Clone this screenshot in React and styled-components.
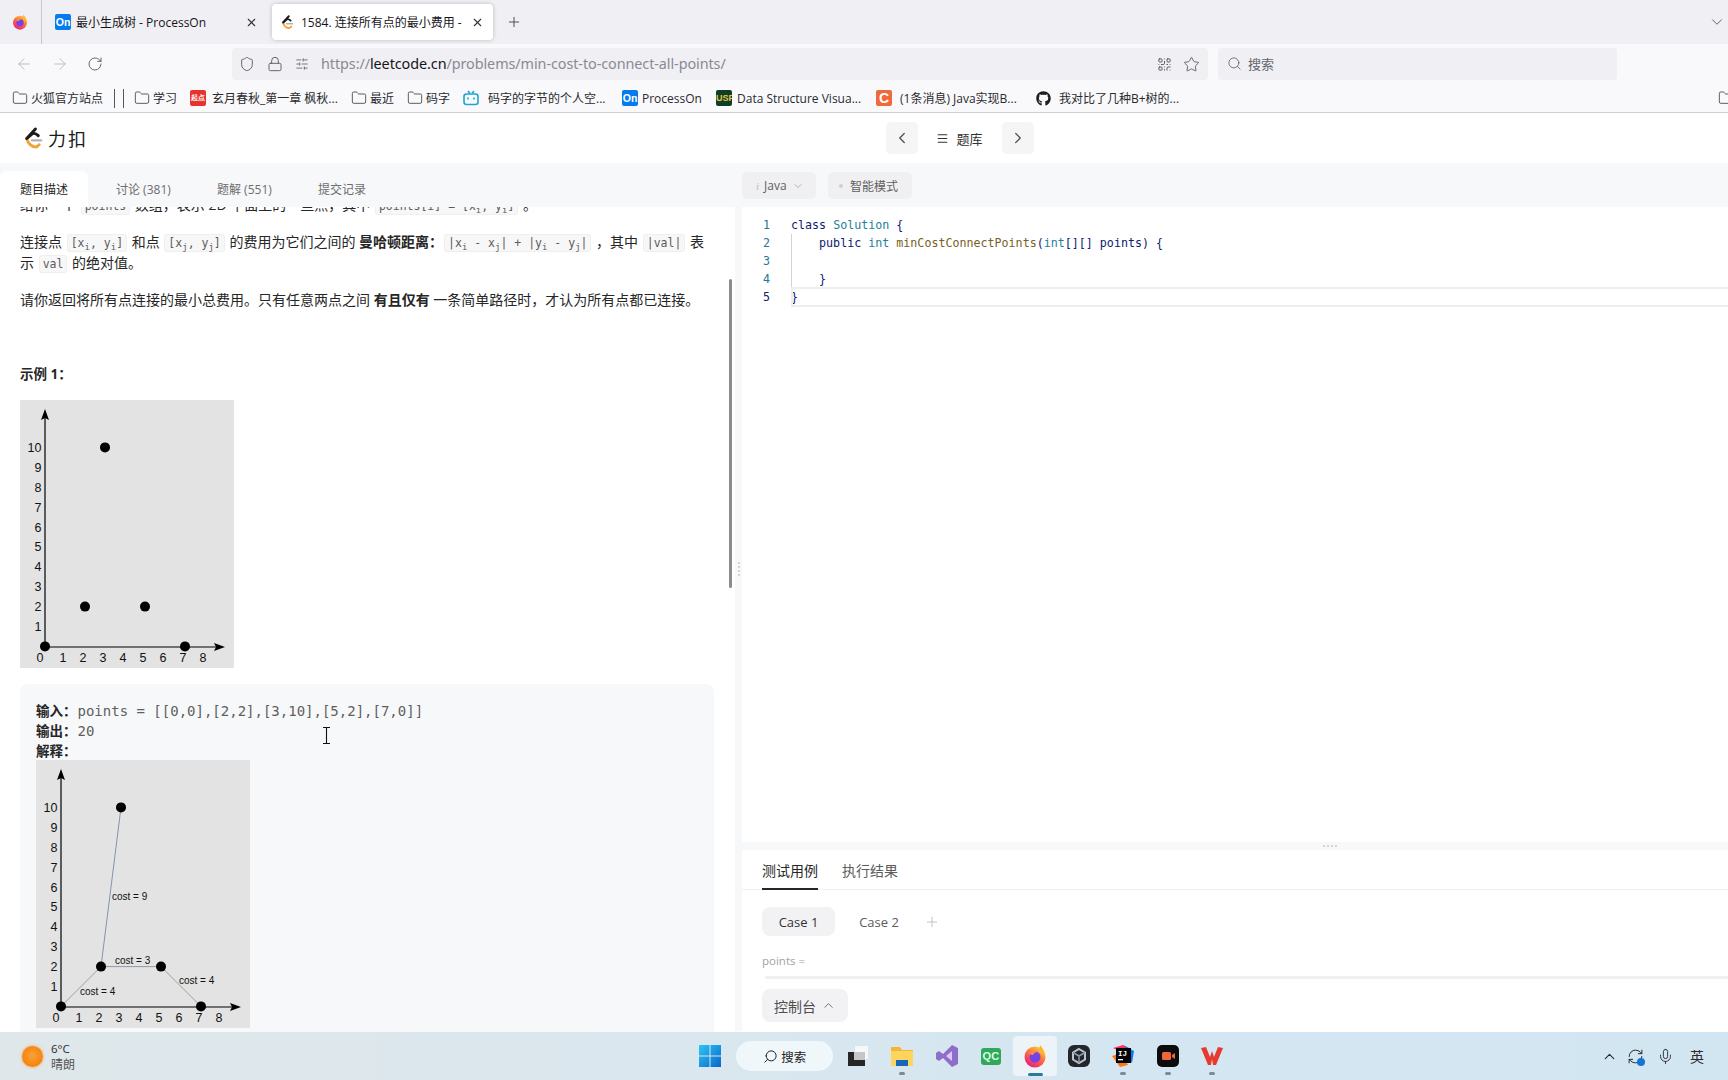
import React from "react";
import styled, { createGlobalStyle } from "styled-components";
import {
  ArrowLeft, ArrowRight, RotateCw, Shield, Lock, Search, Star, Plus, X, ChevronDown, ChevronUp,
  ChevronLeft, ChevronRight, Folder, QrCode, Menu, Mic, RefreshCw, SlidersHorizontal,
} from "lucide-react";
import { FaGithub } from "react-icons/fa";

const UI = `"Noto Sans", "Noto Sans CJK SC", sans-serif`;
const CJK = `"Open Sans", "Noto Sans CJK SC", sans-serif`;
const MONO = `"DejaVu Sans Mono", "Noto Sans CJK SC", monospace`;

const Global = createGlobalStyle`
  html, body { margin: 0; padding: 0; background: #fff; overflow: hidden; }
  * { box-sizing: border-box; }
  #root { width: 1728px; height: 1080px; }
`;

const Screen = styled.div`
  position: relative; width: 1728px; height: 1080px; overflow: hidden;
  display: flex; flex-direction: column; font-family: ${CJK}; color: #262626;
`;

/* browser chrome */
const TabStrip = styled.div`
  height: 44px; flex: none; background: #f0f0f4; display: flex; align-items: center; color: #15141a;
`;
const FoxCell = styled.div`
  width: 42px; height: 44px; flex: none; display: flex; align-items: center; justify-content: center;
  padding-right: 2px; border-right: 1px solid #c8c8cc;
`;
const Tab = styled.div`
  height: 36px; display: flex; align-items: center; flex: none; border-radius: 4px;
  width: ${p => p.$w}px; margin-left: ${p => p.$ml}px; padding: 0 9px 0 ${p => p.$pl}px;
  background: ${p => (p.$active ? "#fff" : "transparent")};
  box-shadow: ${p => (p.$active ? "0 0 4px rgba(0,0,0,.22)" : "none")};
`;
const TabTitle = styled.span`
  flex: 1; font-size: 12px; white-space: nowrap; overflow: hidden; margin-left: ${p => p.$ml}px;
`;
const NewTab = styled.div`margin-left: 13px; display: flex; color: #45454a;`;
const StripEnd = styled.div`margin-left: auto; padding-right: 2px; display: flex; color: #55555a;`;

const OnTile = styled.span`
  width: ${p => p.$s}px; height: ${p => p.$s}px; border-radius: 2px; background: #067bef; color: #fff; flex: none;
  font: 700 ${p => p.$s * 0.66}px/${p => p.$s}px "Liberation Sans", sans-serif; text-align: center;
`;

const Toolbar = styled.div`
  height: 38px; flex: none; background: #f9f9fb; display: flex; align-items: flex-start; padding-top: 4px; color: #5b5b66;
`;
const NavIcons = styled.div`
  width: 232px; flex: none; height: 32px; display: flex; align-items: center; padding-left: 15px; gap: 18px;
`;
const UrlBar = styled.div`
  width: 976px; height: 32px; flex: none; border-radius: 4px; background: #f0f0f4; display: flex; align-items: center;
  padding: 0 8px 0 7px; margin-right: 10px;
`;
const UrlIcons = styled.div`display: flex; align-items: center; gap: 12px; margin-right: 12px;`;
const Url = styled.div`
  flex: 1; font: 400 14.4px ${UI}; color: #8a8a92; white-space: nowrap; letter-spacing: -.08px; margin-top: -2px;
  b { font-weight: 400; color: #15141a; }
`;
const UrlEnd = styled.div`display: flex; align-items: center; gap: 11px;`;
const SearchBar = styled.div`
  width: 399px; height: 32px; flex: none; border-radius: 4px; background: #f0f0f4; display: flex; align-items: center;
  padding: 0 0 2px 9px; gap: 6px; font-size: 13px; color: #65656d;
`;

const Bookmarks = styled.div`
  height: 31px; flex: none; background: #f9f9fb; border-bottom: 1px solid #cfcfd4; display: flex; align-items: center;
  padding: 2px 0 0 12px; color: #15141a; position: relative;
`;
const Bookmark = styled.div`
  width: ${p => p.$w}px; flex: none; display: flex; align-items: center; gap: ${p => p.$gap ?? 3}px;
  font-size: 12px; white-space: nowrap; color: #2a2a2e;
`;
const BmSep = styled.div`width: 1px; height: 19px; background: #55555a; flex: none; margin-right: ${p => p.$mr}px;`;
const BmEnd = styled.div`margin-left: auto; margin-right: -6px; display: flex;`;
const Tile = styled.span`
  width: 16px; height: 16px; flex: none; border-radius: 2px; background: ${p => p.$bg}; color: ${p => p.$fg || "#fff"};
  font: 700 ${p => p.$fs || 9}px/16px "Liberation Sans", sans-serif; text-align: center; overflow: hidden;
`;

/* leetcode */
const Site = styled.div`width: 1920px; flex: 1; min-height: 0; display: flex; flex-direction: column; background: #f7f8fa;`;
const SiteHeader = styled.div`
  height: 50px; flex: none; background: #fff; display: grid; grid-template-columns: 1fr auto 1fr; align-items: center; padding-left: 22px;
`;
const Logo = styled.div`
  display: flex; align-items: center; gap: 3px; font: 400 18px "Noto Sans CJK SC", sans-serif; letter-spacing: 2px; color: #1a1a1a;
`;
const ProblemNav = styled.div`display: flex; align-items: center; margin-left: -23px;`;
const NavBtn = styled.div`
  width: 32px; height: 32px; border-radius: 5px; background: #f5f5f6; display: flex; align-items: center; justify-content: center; color: #4a4a4a;
`;
const NavList = styled.div`
  width: 84px; display: flex; align-items: center; justify-content: center; gap: 7px; font-size: 13px; color: #333;
`;

const Work = styled.div`flex: 1; min-height: 0; display: flex;`;
const LeftPane = styled.div`width: 735px; flex: none; display: flex; flex-direction: column; position: relative;`;
const PaneTabs = styled.div`height: 44px; flex: none; display: flex; align-items: flex-end; background: #f7f8fa;`;
const PaneTab = styled.div`
  height: 36px; width: ${p => p.$w}px; flex: none; padding: 9px 0 0 ${p => p.$pl}px; font-size: 12px;
  color: ${p => (p.$active ? "#262626" : "#6d6d6d")}; background: ${p => (p.$active ? "#fff" : "transparent")};
  border-radius: ${p => (p.$active ? "6px 6px 0 0" : "0")};
`;
const Scroll = styled.div`flex: 1; min-height: 0; overflow: hidden; background: #fff; padding: 0 21px 0 20px;`;
const Article = styled.div`margin-top: -13px; font-size: 14px; line-height: 21px; color: #262626;`;
const Para = styled.p`
  margin: 0 0 16px; white-space: ${p => (p.$nowrap ? "nowrap" : "normal")};
  strong { font-weight: 700; }
`;
const Code = styled.code`
  font: 400 11.5px/18px ${MONO}; color: #5c5c5c; background: #f7f7f8; border: 1px solid #efefef; border-radius: 3px; padding: 1px 3px; margin: 0 1px;
  sub { font-size: 9px; line-height: 0; }
`;
const ExampleHead = styled.p`margin: 54px 0 15px; font-weight: 700; font-size: 13.5px;`;
const ChartBox = styled.div`width: 214px; height: 268px; background: #e3e3e3; flex: none;`;
const Example = styled.div`
  margin-top: 16px; width: 694px; height: 420px; background: #f7f8fa; border-radius: 8px; padding: 16px; font-size: 14px; line-height: 20px;
`;
const ExLine = styled.div`
  height: 20px; font: 400 14px/20px ${MONO}; color: #5f5f5f; white-space: pre;
  b { font: 700 13.5px/20px "Noto Sans CJK SC", sans-serif; color: #262626; margin-right: 1px; }
`;
const ScrollThumb = styled.div`
  position: absolute; left: 729px; top: 116px; width: 3px; height: 309px; background: #8c8c8c; border-radius: 2px;
`;
const Gutter = styled.div`
  width: 7px; flex: none; display: flex; align-items: center; justify-content: center; padding-bottom: 58px;
`;
const Dots = styled.div`
  width: ${p => (p.$h ? "14px" : "2px")}; height: ${p => (p.$h ? "2px" : "14px")};
  background: repeating-linear-gradient(${p => (p.$h ? "90deg" : "0deg")}, #d4d4d4 0 2px, transparent 2px 4px);
`;

const RightPane = styled.div`flex: 1; min-width: 0; display: flex; flex-direction: column;`;
const EditorBar = styled.div`height: 44px; flex: none; display: flex; align-items: flex-end; gap: 12px; padding-bottom: 8px;`;
const BarBtn = styled.div`
  height: 27px; border-radius: 5px; background: #f0f0f2; color: #5f5f5f; font-size: 12px; display: flex; align-items: center;
  width: ${p => p.$w}px; padding-left: ${p => p.$pl}px; gap: ${p => p.$gap}px;
`;
const Hint = styled.i`color: #bdbdbd; font-size: 11px; font-family: "Liberation Serif", serif;`;
const SmallDot = styled.span`width: 4px; height: 4px; border-radius: 50%; background: #cfcfcf; flex: none;`;
const Editor = styled.div`
  height: 635px; flex: none; background: #fff; padding-top: 9px; font: 400 11.67px/18px ${MONO};
`;
const CodeRow = styled.div`
  position: relative; height: 18px; display: flex; color: #0b216f;
  ${p => p.$current && `&::after { content: ""; position: absolute; left: 49px; right: 0; top: -1px; bottom: -1px; border: 2px solid #eeeeee; border-right: 0; pointer-events: none; }`}
`;
const CodeText = styled.span`white-space: pre;`;
const LineNo = styled.span`
  width: 49px; flex: none; text-align: right; padding-right: 21px; color: ${p => (p.$current ? "#0b216f" : "#237893")};
`;
const IndentGuide = styled.span`
  position: absolute; left: 49px; top: 0; bottom: 0; width: 1px; background: #d3d3d3;
`;
const Kw = styled.span`color: ${p => p.$c};`;
const ResizeBar = styled.div`height: 8px; flex: none; display: flex; justify-content: center; align-items: center; width: 1176px;`;
const Console = styled.div`flex: 1; min-height: 0; background: #fff; padding-left: 20px; position: relative;`;
const ConsoleTabs = styled.div`
  height: 40px; display: flex; gap: 24px; margin-left: -20px; padding-left: 20px; border-bottom: 1px solid #f0f0f0; font-size: 14px; padding-top: 11px;
`;
const ConsoleTab = styled.div`
  height: 29px; width: 56px; white-space: nowrap; line-height: 20px; font-size: 14px; color: ${p => (p.$active ? "#262626" : "#5c5c5c")};
  ${p => p.$active && `border-bottom: 2px solid #262626;`}
`;
const Cases = styled.div`display: flex; align-items: center; margin-top: 17px; height: 29px; font-size: 13px; color: #5c5c5c;`;
const CasePill = styled.div`
  width: ${p => p.$w}px; height: 29px; display: flex; align-items: center; justify-content: center; border-radius: 8px;
  background: ${p => (p.$active ? "#f2f2f4" : "transparent")}; color: ${p => (p.$active ? "#333" : "#5c5c5c")};
`;
const AddCase = styled.div`display: flex; margin-left: 1px; color: #b5b5b5;`;
const ParamLabel = styled.div`font-size: 11.5px; color: #a3a3a3; line-height: 16px; margin-top: 17px;`;
const ParamLine = styled.div`height: 3px; margin: 7px 0 0 3px; background: #f0f0f0; border-radius: 2px;`;
const ConsoleBtn = styled.div`
  margin-top: 10px; width: 86px; height: 33px; border-radius: 8px; background: #f2f2f4; color: #4e4e4e; font-size: 14px;
  display: flex; align-items: center; justify-content: center; gap: 5px;
`;

/* taskbar */
const Taskbar = styled.div`
  height: 48px; flex: none; display: flex; align-items: center;
  background: linear-gradient(90deg, #dfe7ea 0%, #dbe7ee 35%, #d4e6f1 65%, #d2e6f2 100%);
  box-shadow: 0 -1px 0 rgba(255,255,255,.6);
`;
const Weather = styled.div`width: 688px; flex: none; display: flex; align-items: center; padding: 1px 0 0 22px; gap: 8px;`;
const Sun = styled.span`
  width: 21px; height: 21px; border-radius: 50%; background: radial-gradient(circle at 50% 45%, #f8a23a, #f7820c 70%, #f68a1c);
  box-shadow: 0 0 2px 1px rgba(250,170,90,.6);
`;
const WeatherText = styled.div`font-size: 11.5px; line-height: 16px; color: #2b2b2b; span { display: block; color: #555; font-size: 12px; }`;
const TaskCell = styled.div`
  position: relative; width: 44.2px; height: 40px; flex: none; display: flex; align-items: center; justify-content: center; border-radius: 4px;
  background: ${p => (p.$active ? "rgba(255,255,255,.55)" : "transparent")};
  ${p => p.$dot && `&::after { content: ""; position: absolute; bottom: ${p.$active ? 0 : 1}px; left: 50%; width: ${p.$active ? 15 : 6}px; height: 3px; margin-left: -${p.$active ? 7.5 : 3}px; border-radius: 2px; background: ${p.$active ? "#2a7a9a" : "#7e8a92"}; }`}
`;
const SearchPill = styled.div`
  width: 97px; height: 30px; margin: 0 3px 0 4px; border-radius: 15px; background: #f0f7fb; flex: none;
  display: flex; align-items: center; justify-content: center; gap: 3px; font-size: 12.5px; color: #222;
`;
const QcTile = styled.span`
  width: 20px; height: 17px; border-radius: 3px; background: #2fa85c; color: #d8ffe2;
  font: 700 11px/17px "Liberation Sans", sans-serif; text-align: center;
`;
const Tray = styled.div`margin-left: auto; display: flex; align-items: center; color: #2a2a2a; padding-right: 24px; gap: 10px;`;
const SyncWrap = styled.span`position: relative; display: flex; margin: 0 3px 0 -1px;`;
const SyncDot = styled.span`position: absolute; right: -1px; bottom: -1px; width: 8px; height: 8px; border-radius: 50%; background: #1573d4;`;
const Lang = styled.span`font: 400 14px "Noto Sans CJK SC", sans-serif; margin-left: 6px;`;
const FlippedSearch = styled(Search)`transform: scaleX(-1);`;
const Cursor = styled.svg`position: absolute; left: 322px; top: 727px; pointer-events: none;`;

function FoxIcon({ id, size = 16 }) {
  return (
    <svg width={size} height={size} viewBox="0 0 24 24">
      <defs>
        <linearGradient id={id} x1="0.8" y1="0" x2="0.2" y2="1">
          <stop offset="0" stopColor="#ffd43a" /><stop offset=".45" stopColor="#ff7139" /><stop offset="1" stopColor="#e31587" />
        </linearGradient>
      </defs>
      <circle cx="12" cy="13" r="10.5" fill={`url(#${id})`} />
      <path d="M17 1c3 3 5 7 5 11L16 8z" fill="#ffb52e" />
      <circle cx="12" cy="13" r="5.5" fill="#7542e5" />
      <path d="M6 10c2-3 6-4 9-2-3 0-4 1-5 3z" fill="#ff8a50" />
    </svg>
  );
}

function LcLogo({ size }) {
  return (
    <svg width={size} height={size} viewBox="0 0 24 24" fill="none" strokeLinecap="round" strokeLinejoin="round">
      <path d="M14 2 L5 12" stroke="#1c1c1c" strokeWidth="3" />
      <path d="M5 12 C6 17 10 21 15 21 L18 18.5" stroke="#f2a33a" strokeWidth="3" />
      <path d="M5 12 L11 7 C13 6 15 7 17 9" stroke="#1c1c1c" strokeWidth="3" />
      <path d="M10.5 14 H20" stroke="#b3b3b3" strokeWidth="2.4" />
    </svg>
  );
}

const ys = v => 246.4 - v * 19.9;
const xs = v => 25 + v * 20;

function Chart({ edges = [], labels = [] }) {
  const pts = [[0, 0], [2, 2], [3, 10], [5, 2], [7, 0]];
  const xLabel = [20, 43, 63, 83, 103, 123, 143, 163, 183];
  return (
    <ChartBox>
      <svg width="214" height="268" viewBox="0 0 214 268" fontFamily="Liberation Sans, Arial, sans-serif" fill="#111">
        {edges.map(([a, b, c], i) => (
          <line key={i} x1={xs(a[0])} y1={ys(a[1])} x2={xs(b[0])} y2={ys(b[1])} stroke={c} strokeWidth="1" />
        ))}
        <line x1="25" y1="247" x2="25" y2="14" stroke="#000" strokeWidth="1.2" />
        <line x1="25" y1="247" x2="200" y2="247" stroke="#000" strokeWidth="1.2" />
        <path d="M25 9 L29 20 L25 18 L21 20 Z" fill="#000" />
        <path d="M205 247 L194 243 L196 247 L194 251 Z" fill="#000" />
        {pts.map(([x, y]) => <circle key={x} cx={xs(x)} cy={ys(y)} r="5" fill="#000" />)}
        {[1, 2, 3, 4, 5, 6, 7, 8, 9, 10].map(v => (
          <text key={v} x="21.5" y={ys(v) + 4.5} fontSize="12.5" textAnchor="end">{v}</text>
        ))}
        {xLabel.map((x, i) => <text key={i} x={x} y="262" fontSize="12.5" textAnchor="middle">{i}</text>)}
        {labels.map(([t, x, y]) => <text key={x} x={x} y={y + 2.5} fontSize="10">{t}</text>)}
      </svg>
    </ChartBox>
  );
}

const FolderIcon = () => <Folder size={16} strokeWidth={1.3} color="#44444a" />;

export default function App() {
  return (
    <Screen>
      <Global />
      <TabStrip>
        <FoxCell><FoxIcon id="fx1" /></FoxCell>
        <Tab $w={221} $ml={4} $pl={9}>
          <OnTile $s={16}>On</OnTile>
          <TabTitle $ml={5}>最小生成树 - ProcessOn</TabTitle>
          <X size={13} color="#33333a" />
        </Tab>
        <Tab $w={221} $ml={5} $active $pl={8}>
          <LcLogo size={15} />
          <TabTitle $ml={6}>1584. 连接所有点的最小费用 -</TabTitle>
          <X size={13} color="#33333a" />
        </Tab>
        <NewTab><Plus size={16} strokeWidth={1.4} /></NewTab>
        <StripEnd><ChevronDown size={18} strokeWidth={1.2} /></StripEnd>
      </TabStrip>

      <Toolbar>
        <NavIcons>
          <ArrowLeft size={18} strokeWidth={1.3} color="#bcbcc2" />
          <ArrowRight size={18} strokeWidth={1.3} color="#bcbcc2" />
          <RotateCw size={16} strokeWidth={1.4} />
        </NavIcons>
        <UrlBar>
          <UrlIcons>
            <Shield size={16} strokeWidth={1.4} />
            <Lock size={16} strokeWidth={1.4} />
            <SlidersHorizontal size={14} strokeWidth={1.4} />
          </UrlIcons>
          <Url>https://<b>leetcode.cn</b>/problems/min-cost-to-connect-all-points/</Url>
          <UrlEnd>
            <QrCode size={15} strokeWidth={1.6} />
            <Star size={17} strokeWidth={1.3} />
          </UrlEnd>
        </UrlBar>
        <SearchBar><Search size={15} strokeWidth={1.4} />搜索</SearchBar>
      </Toolbar>

      <Bookmarks>
        <Bookmark $w={102}><FolderIcon />火狐官方站点</Bookmark>
        <BmSep $mr={8} /><BmSep $mr={10} />
        <Bookmark $w={56}><FolderIcon />学习</Bookmark>
        <Bookmark $w={161} $gap={6}><Tile $bg="#e8322e" $fs={7}>起点</Tile>玄月春秋_第一章 枫秋...</Bookmark>
        <Bookmark $w={56}><FolderIcon />最近</Bookmark>
        <Bookmark $w={56}><FolderIcon />码字</Bookmark>
        <Bookmark $w={159} $gap={9}>
          <svg width="16" height="16" viewBox="0 0 16 16" fill="none" stroke="#1da6d0" strokeWidth="1.6">
            <rect x="1" y="4" width="14" height="10.5" rx="2.5" /><path d="M5 1l2 2.5M11 1L9 3.5" />
            <path d="M5 7.5v2M11 7.5v2" />
          </svg>
          码字的字节的个人空...
        </Bookmark>
        <Bookmark $w={94} $gap={4}><OnTile $s={16}>On</OnTile>ProcessOn</Bookmark>
        <Bookmark $w={160} $gap={5}><Tile $bg="#0f3d26" $fg="#e4c44a">USF</Tile>Data Structure Visua...</Bookmark>
        <Bookmark $w={160} $gap={8}><Tile $bg="#f0683c" $fs={14}>C</Tile>(1条消息) Java实现B...</Bookmark>
        <Bookmark $w={160} $gap={8}><FaGithub size={15} color="#1b1f23" />我对比了几种B+树的...</Bookmark>
        <BmEnd><FolderIcon /></BmEnd>
      </Bookmarks>

      <Site>
        <SiteHeader>
          <Logo><LcLogo size={23} />力扣</Logo>
          <ProblemNav>
            <NavBtn><ChevronLeft size={18} strokeWidth={1.6} /></NavBtn>
            <NavList><Menu size={13} strokeWidth={2} />题库</NavList>
            <NavBtn><ChevronRight size={18} strokeWidth={1.6} /></NavBtn>
          </ProblemNav>
          <span />
        </SiteHeader>
        <Work>
          <LeftPane>
            <PaneTabs>
              <PaneTab $w={88} $pl={20} $active>题目描述</PaneTab>
              <PaneTab $w={129} $pl={28}>讨论 (381)</PaneTab>
              <PaneTab $w={101} $pl={0}>题解 (551)</PaneTab>
              <PaneTab $w={100} $pl={0}>提交记录</PaneTab>
            </PaneTabs>
            <Scroll>
              <Article>
                <Para $nowrap>给你一个 <Code>points</Code> 数组，表示 2D 平面上的一些点，其中 <Code>points[i] = [x<sub>i</sub>, y<sub>i</sub>]</Code> 。</Para>
                <Para $nowrap>
                  连接点 <Code>[x<sub>i</sub>, y<sub>i</sub>]</Code> 和点 <Code>[x<sub>j</sub>, y<sub>j</sub>]</Code> 的费用为它们之间的 <strong>曼哈顿距离：</strong><Code>|x<sub>i</sub> - x<sub>j</sub>| + |y<sub>i</sub> - y<sub>j</sub>|</Code> ，其中 <Code>|val|</Code> 表<br />
                  示 <Code>val</Code> 的绝对值。
                </Para>
                <Para $nowrap>请你返回将所有点连接的最小总费用。只有任意两点之间 <strong>有且仅有</strong> 一条简单路径时，才认为所有点都已连接。</Para>
                <ExampleHead>示例 1：</ExampleHead>
                <Chart />
                <Example>
                  <ExLine><b>输入：</b>points = [[0,0],[2,2],[3,10],[5,2],[7,0]]</ExLine>
                  <ExLine><b>输出：</b>20</ExLine>
                  <ExLine><b>解释：</b></ExLine>
                  <Chart
                    edges={[
                      [[0, 0], [2, 2], "#a0a0a0"],
                      [[2, 2], [3, 10], "#8592b0"],
                      [[2, 2], [5, 2], "#8f9aa0"],
                      [[5, 2], [7, 0], "#a0a0a0"],
                    ]}
                    labels={[["cost = 9", 76, 137], ["cost = 3", 79, 201], ["cost = 4", 143, 221], ["cost = 4", 44, 232]]}
                  />
                </Example>
              </Article>
            </Scroll>
            <ScrollThumb />
          </LeftPane>
          <Gutter><Dots /></Gutter>
          <RightPane>
            <EditorBar>
              <BarBtn $w={74} $pl={14} $gap={5}><Hint>i</Hint>Java<ChevronDown size={12} strokeWidth={1.4} color="#999" /></BarBtn>
              <BarBtn $w={84} $pl={11} $gap={7}><SmallDot />智能模式</BarBtn>
            </EditorBar>
            <Editor>
              <CodeRow><LineNo>1</LineNo><CodeText><Kw $c="#0b216f">class</Kw> <Kw $c="#267f99">Solution</Kw> {"{"}</CodeText></CodeRow>
              <CodeRow><IndentGuide /><LineNo>2</LineNo><CodeText>{"    "}<Kw $c="#0b216f">public</Kw> <Kw $c="#267f99">int</Kw> <Kw $c="#795e26">minCostConnectPoints</Kw>(<Kw $c="#267f99">int</Kw>[][] points) {"{"}</CodeText></CodeRow>
              <CodeRow><IndentGuide /><LineNo>3</LineNo></CodeRow>
              <CodeRow><IndentGuide /><LineNo>4</LineNo><CodeText>{"    }"}</CodeText></CodeRow>
              <CodeRow $current><LineNo $current>5</LineNo><CodeText>{"}"}</CodeText></CodeRow>
            </Editor>
            <ResizeBar><Dots $h /></ResizeBar>
            <Console>
              <ConsoleTabs>
                <ConsoleTab $active>测试用例</ConsoleTab>
                <ConsoleTab>执行结果</ConsoleTab>
              </ConsoleTabs>
              <Cases>
                <CasePill $w={73} $active>Case 1</CasePill>
                <CasePill $w={88}>Case 2</CasePill>
                <AddCase><Plus size={16} strokeWidth={1.2} /></AddCase>
              </Cases>
              <ParamLabel>points =</ParamLabel>
              <ParamLine />
              <ConsoleBtn>控制台<ChevronUp size={15} strokeWidth={1.6} color="#777" /></ConsoleBtn>
            </Console>
          </RightPane>
        </Work>
      </Site>

      <Taskbar>
        <Weather>
          <Sun />
          <WeatherText>6°C<span>晴朗</span></WeatherText>
        </Weather>
        <TaskCell>
          <svg width="24" height="24" viewBox="0 0 24 24">
            <defs>
              <linearGradient id="win" x1="0" y1="0" x2="1" y2="1">
                <stop offset="0" stopColor="#2cc6f5" /><stop offset="1" stopColor="#0a66c8" />
              </linearGradient>
            </defs>
            <path d="M1 1h10.5v10.5H1zM12.5 1H23v10.5H12.5zM1 12.5h10.5V23H1zM12.5 12.5H23V23H12.5z" fill="url(#win)" />
          </svg>
        </TaskCell>
        <SearchPill><FlippedSearch size={15} strokeWidth={1.6} />搜索</SearchPill>
        <TaskCell>
          <svg width="24" height="24" viewBox="0 0 24 24">
            <rect x="9" y="2" width="13" height="13" fill="#f4f8fa" />
            <rect x="2" y="8" width="17" height="14" fill="#262626" />
            <rect x="8" y="8" width="11" height="8" fill="#c6c6c6" />
          </svg>
        </TaskCell>
        <TaskCell $dot>
          <svg width="24" height="24" viewBox="0 0 24 24">
            <path d="M1 3h9l2 3h11v16H1z" fill="#f2b632" />
            <path d="M1 7h22v15H1z" fill="#fcd45e" />
            <rect x="6" y="16" width="12" height="6" fill="#1667b8" />
          </svg>
        </TaskCell>
        <TaskCell>
          <svg width="24" height="24" viewBox="0 0 24 24">
            <path d="M17 1l6 3v16l-6 3-9-9-4 3-3-2V9l3-2 4 3z" fill="#8f6ecb" />
            <path d="M17 7v10l-6-5z" fill="#d9ccf2" />
          </svg>
        </TaskCell>
        <TaskCell><QcTile>QC</QcTile></TaskCell>
        <TaskCell $active $dot><FoxIcon id="fx2" size={24} /></TaskCell>
        <TaskCell>
          <svg width="24" height="24" viewBox="0 0 24 24">
            <rect x="1" y="1" width="22" height="22" rx="6" fill="#23262b" />
            <path d="M12 5l6 3.5v7L12 19l-6-3.5v-7z" fill="none" stroke="#b9c6d2" strokeWidth="2" />
            <path d="M12 12v7M12 12L6 8.5M12 12l6-3.5" stroke="#8d9aa6" strokeWidth="1.5" />
          </svg>
        </TaskCell>
        <TaskCell $dot>
          <svg width="24" height="24" viewBox="0 0 24 24">
            <path d="M2 4l10-3 6 3-4 6z" fill="#fe315d" /><path d="M14 2l9 5-2 12-6-8z" fill="#087cfa" />
            <path d="M1 12l8 11 8-2-7-12z" fill="#f97a12" />
            <rect x="5" y="4" width="15" height="15" fill="#000" />
            <text x="7" y="12" fontSize="7.5" fontWeight="700" fill="#fff" fontFamily="Liberation Mono, monospace">IJ</text>
            <rect x="7" y="15" width="5" height="1.3" fill="#fff" />
          </svg>
        </TaskCell>
        <TaskCell $dot>
          <svg width="24" height="24" viewBox="0 0 24 24">
            <rect x="1" y="1" width="22" height="22" rx="5" fill="#0c0c0c" />
            <rect x="6" y="8" width="9" height="8" rx="1.5" fill="#f0653a" />
            <path d="M16 11l3-2v6l-3-2z" fill="#f0653a" />
          </svg>
        </TaskCell>
        <TaskCell $dot>
          <svg width="24" height="24" viewBox="0 0 24 24">
            <path d="M1 4l5-1 4 10 2-6 2 6 4-10 5 1-7 17h-3l-1-6-1 6H8z" fill="#e6392f" />
          </svg>
        </TaskCell>
        <Tray>
          <ChevronUp size={17} strokeWidth={1.6} />
          <SyncWrap><RefreshCw size={17} strokeWidth={1.4} /><SyncDot /></SyncWrap>
          <Mic size={17} strokeWidth={1.3} />
          <Lang>英</Lang>
        </Tray>
      </Taskbar>

      <Cursor width="9" height="17" viewBox="0 0 9 17" fill="none" stroke="#111" strokeWidth="1.1">
        <path d="M1 .5h7M4.5.5v16M1 16.5h7" />
      </Cursor>
    </Screen>
  );
}
